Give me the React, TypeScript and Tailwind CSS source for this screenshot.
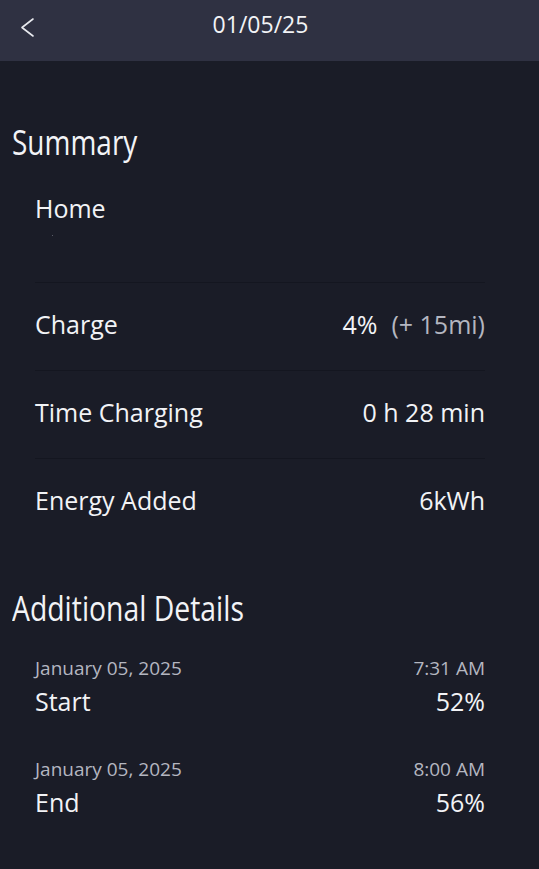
import React from "react";

const body = { fontFamily: '"Open Sans", "Noto Sans", sans-serif' };

function Row({ label, children }: { label: string; children: React.ReactNode }) {
    return (
        <div className="flex items-center justify-between h-[87px] pb-[3px] text-[25px] text-[#f2f3f6]">
            <span>{label}</span>
            <span>{children}</span>
        </div>
    );
}

function Detail({ date, time, label, value }: { date: string; time: string; label: string; value: string }) {
    return (
        <div className="flex flex-col">
            <div className="flex justify-between text-[19px] text-[#b4b6c0] leading-[24px]">
                <span>{date}</span>
                <span>{time}</span>
            </div>
            <div className="flex justify-between text-[25px] text-[#f2f3f6] leading-[34px] mt-[4px]">
                <span>{label}</span>
                <span>{value}</span>
            </div>
        </div>
    );
}

export default function App() {
    return (
        <div className="w-[539px] h-[869px] bg-[#1a1c27] overflow-hidden" style={body}>
            <div className="relative flex justify-center h-[61px] pt-[13px] pr-[18px] bg-[#2f3142]">
                <svg className="absolute left-[18px] top-[15px]" width="20" height="26" viewBox="0 0 20 26" fill="none">
                    <path d="M15 4 L4 12.5 L15 21" stroke="#e8e9ee" strokeWidth="1.6" strokeLinecap="round" strokeLinejoin="round" />
                </svg>
                <span className="text-[23px] leading-none text-[#f2f3f6]">01/05/25</span>
            </div>

            <h1 className="text-[35px] text-[#f2f3f6] leading-none pl-[12px] mt-[63px]">
                <span className="inline-block scale-x-[0.8] origin-left">Summary</span>
            </h1>

            <div className="pl-[35px] pr-[54px] mt-[34px]">
                <div className="text-[25px] text-[#f2f3f6] leading-[30px]">Home</div>
                <div className="h-[59px] pt-[12px] pl-[17px]">
                    <div className="w-[1px] h-[1px] bg-[#5a5c68]"></div>
                </div>
                <div className="border-t border-[#141620]"></div>
                <Row label="Charge">
                    4%<span className="text-[#b4b6c0] ml-[14px]">(+ 15mi)</span>
                </Row>
                <div className="border-t border-[#141620]"></div>
                <Row label="Time Charging">0 h 28 min</Row>
                <div className="border-t border-[#141620]"></div>
                <Row label="Energy Added">6kWh</Row>
            </div>

            <h2 className="text-[35px] text-[#f2f3f6] leading-none pl-[12px] mt-[44px]">
                <span className="inline-block scale-x-[0.81] origin-left whitespace-nowrap">Additional Details</span>
            </h2>

            <div className="pl-[35px] pr-[54px] mt-[31px] flex flex-col gap-[39px]">
                <Detail date="January 05, 2025" time="7:31 AM" label="Start" value="52%" />
                <Detail date="January 05, 2025" time="8:00 AM" label="End" value="56%" />
            </div>
        </div>
    );
}
